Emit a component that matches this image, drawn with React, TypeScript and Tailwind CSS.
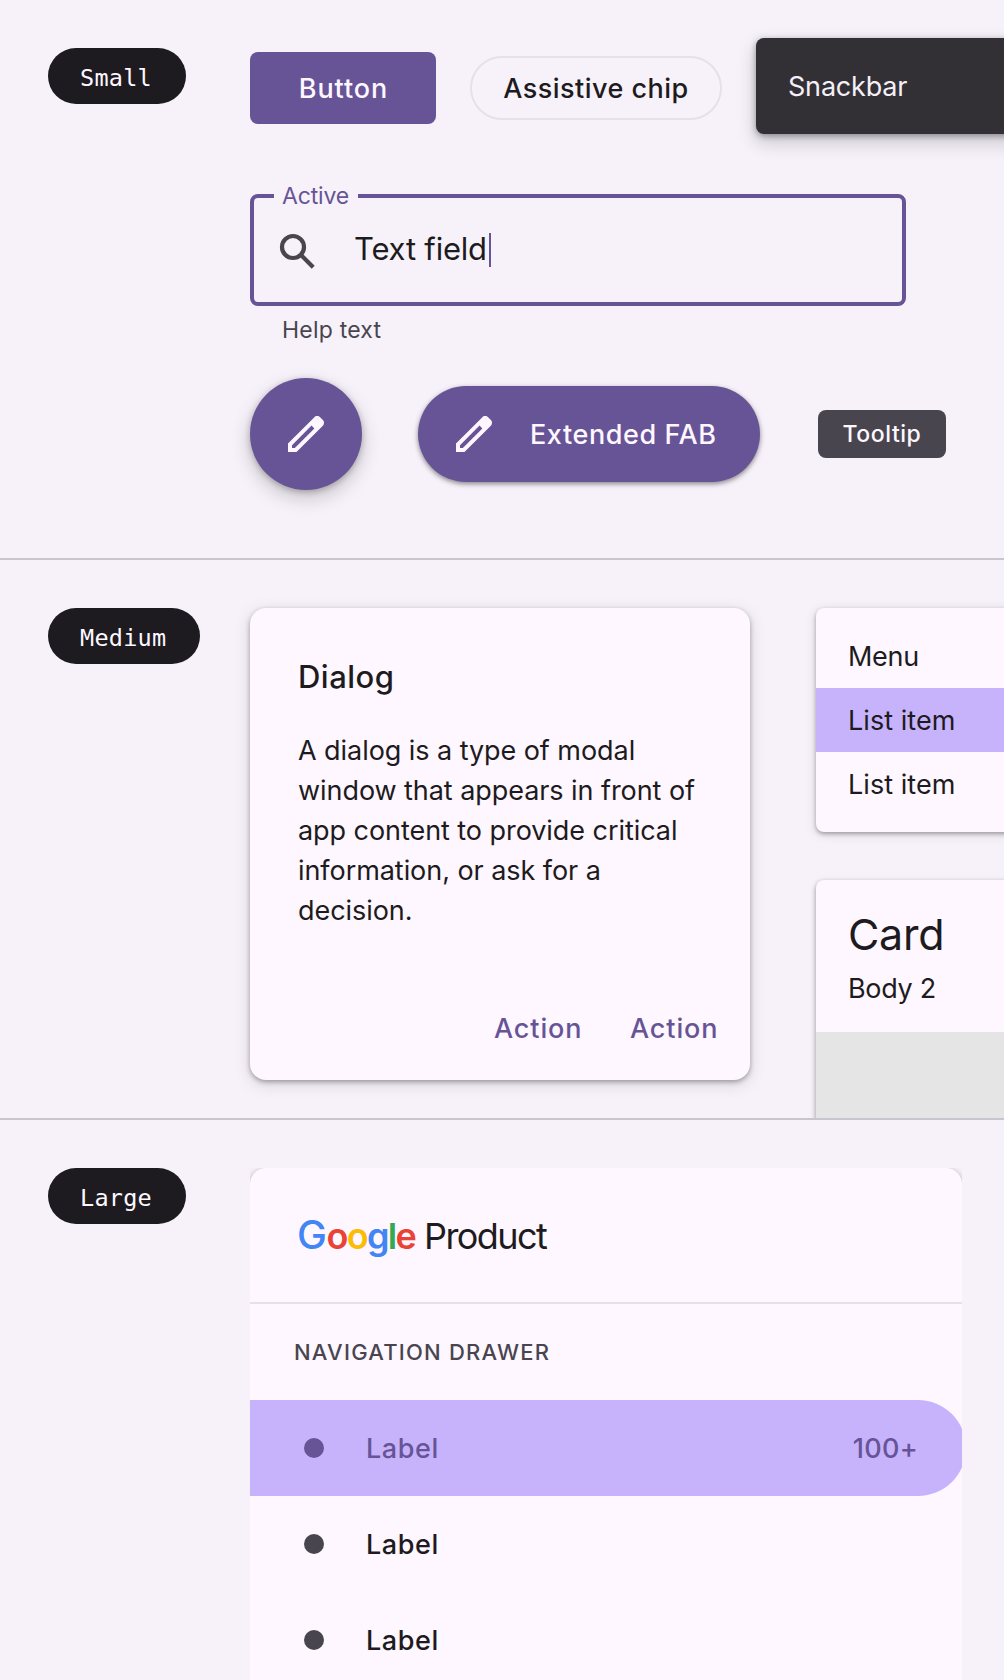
import React from "react";

function Pill({ children, width }: { children: string; width: string }) {
  return (
    <div className="w-[202px] shrink-0">
      <div
        className={`${width} h-14 rounded-full bg-[#1d1b20] pl-8 font-['DejaVu_Sans_Mono',monospace] text-[23.5px] leading-[61px] tracking-[0.25px] text-[#fef7ff]`}
      >
        {children}
      </div>
    </div>
  );
}

function PencilIcon() {
  return (
    <svg viewBox="0 0 24 24" className="size-12 shrink-0 fill-[#fef7ff]">
      <path d="M5 19h1.425L16.2 9.225 14.775 7.8 5 17.575V19Zm-2 2v-4.25L16.2 3.575c.2-.183.42-.325.663-.425.241-.1.495-.15.762-.15.267 0 .525.05.775.15.25.1.467.25.65.45L20.425 5c.2.183.346.4.437.65a2.166 2.166 0 0 1 0 1.512c-.091.242-.237.463-.437.663L7.25 21H3Z" />
    </svg>
  );
}

function SearchIcon() {
  return (
    <svg
      viewBox="0 0 24 24"
      className="mt-1 size-12 shrink-0 fill-none stroke-[#49454f] stroke-[2.1]"
    >
      <circle cx="9.5" cy="9.5" r="5.5" />
      <path d="M13.3 13.3 19.6 19.6" />
    </svg>
  );
}

function SmallSection() {
  return (
    <section className="flex h-[560px] overflow-hidden border-b-2 border-[#cac4d0] pl-12">
      <div className="pt-12">
        <Pill width="w-[138px]">Small</Pill>
      </div>
      <div className="shrink-0 pt-[38px]">
        <div className="flex h-24 items-start">
          <button className="mt-[14px] h-[72px] w-[186px] rounded-lg bg-[#675496] pt-[2px] pl-px text-[27px] font-medium tracking-[0.9px] text-[#fef7ff]">
            Button
          </button>
          <button className="mt-[18px] ml-[34px] h-16 w-[252px] whitespace-nowrap rounded-full border-2 border-[#e6e0e9] pt-[2px] text-[27px] font-medium tracking-[0.47px]">
            Assistive chip
          </button>
          <div className="ml-[34px] h-24 w-[400px] rounded-lg bg-[#322f35] pl-8 text-[27px] leading-[97px] tracking-[-0.2px] text-[#f5eff7] shadow-[0_2px_6px_rgba(0,0,0,0.35),0_8px_18px_2px_rgba(0,0,0,0.16)]">
            Snackbar
          </div>
        </div>

        <div className="relative mt-[60px] flex h-28 w-[656px] items-center rounded-lg border-4 border-[#675496] pl-5">
          <span className="absolute -top-4 left-5 h-6 w-[84px] bg-[#f7f2fa] pl-2 text-[23px] leading-[28px] tracking-[-0.15px] text-[#675496]">
            Active
          </span>
          <SearchIcon />
          <span className="mb-[2px] ml-8 text-[31px] leading-10 tracking-[-0.2px]">Text field</span>
          <span className="ml-[2px] h-[34px] w-[2px] bg-[#675496]" />
        </div>
        <div className="mt-3 pl-8 text-[23px] leading-6 tracking-[0.21px] text-[#49454f]">Help text</div>

        <div className="mt-9 flex items-center">
          <button className="flex size-28 items-center justify-center rounded-full bg-[#675496] shadow-[0_2px_6px_rgba(0,0,0,0.25),0_8px_18px_2px_rgba(0,0,0,0.16)]">
            <PencilIcon />
          </button>
          <button className="ml-14 flex h-24 w-[342px] items-center gap-8 whitespace-nowrap rounded-full bg-[#675496] pl-8 text-[27px] font-medium tracking-[0.58px] text-[#fef7ff] shadow-[0_2px_4px_rgba(0,0,0,0.35),0_2px_6px_1px_rgba(0,0,0,0.1)]">
            <PencilIcon />
            <span className="pt-[2px]">Extended FAB</span>
          </button>
          <div className="ml-[58px] h-12 w-32 rounded-lg bg-[#49454f] text-center text-[23px] font-medium leading-12 tracking-[0.54px] text-[#fef7ff]">
            Tooltip
          </div>
        </div>
      </div>
    </section>
  );
}

function MediumSection() {
  return (
    <section className="flex h-[560px] overflow-hidden border-b-2 border-[#cac4d0] pt-12 pl-12">
      <Pill width="w-[152px]">Medium</Pill>
      <div className="h-[472px] w-[500px] shrink-0 rounded-2xl bg-[#fef7ff] px-12 pt-[49px] shadow-[0_2px_5px_rgba(0,0,0,0.32),0_4px_16px_2px_rgba(0,0,0,0.1)]">
        <h2 className="text-[31px] font-medium leading-10 tracking-[0.5px]">Dialog</h2>
        <p className="mt-[34px] whitespace-nowrap text-[27px] leading-10 tracking-[-0.06px]">
          A dialog is a type of modal
          <br />
          window that appears in front of
          <br />
          app content to provide critical
          <br />
          information, or ask for a
          <br />
          decision.
        </p>
        <div className="mt-[78px] ml-[196px] flex gap-12 text-[27px] font-medium leading-10 tracking-[0.9px] text-[#675496]">
          <button className="w-[88px] text-left">Action</button>
          <button className="w-[88px] text-left">Action</button>
        </div>
      </div>

      <div className="ml-[66px] flex shrink-0 flex-col gap-12 text-[27px]">
        <div className="w-[300px] shrink-0 rounded-lg bg-[#fef7ff] py-4 shadow-[0_2px_4px_rgba(0,0,0,0.32),0_2px_12px_2px_rgba(0,0,0,0.08)]">
          <div className="h-16 pl-8 leading-[66px] tracking-[-0.3px]">Menu</div>
          <div className="h-16 bg-[#c7b3fc] pl-8 leading-[66px] tracking-[0.05px]">List item</div>
          <div className="h-16 pl-8 leading-[66px] tracking-[0.05px]">List item</div>
        </div>
        <div className="w-[300px] shrink-0 overflow-hidden rounded-lg bg-[#fef7ff] shadow-[0_2px_4px_rgba(0,0,0,0.32),0_2px_6px_2px_rgba(0,0,0,0.08)]">
          <div className="pt-[26px] pb-[23px] pl-8">
            <div className="text-[43px] leading-14 tracking-[-0.3px]">Card</div>
            <div className="mt-[7px] leading-10 tracking-[-0.3px]">Body 2</div>
          </div>
          <div className="h-[240px] bg-[#e5e5e5]" />
        </div>
      </div>
    </section>
  );
}

function DrawerRow({ active, badge }: { active?: boolean; badge?: string }) {
  return (
    <div
      className={`flex h-24 w-[716px] items-center rounded-r-full pr-12 pl-[54px] text-[27px] font-medium ${
        active ? "bg-[#c7b3fc] text-[#675496]" : ""
      }`}
    >
      <span className={`size-5 rounded-full ${active ? "bg-[#675496]" : "bg-[#49454f]"}`} />
      <span className="ml-[42px] pt-[2px] tracking-[0.6px]">Label</span>
      {badge && <span className="ml-auto pt-[2px] tracking-[0.3px]">{badge}</span>}
    </div>
  );
}

function LargeSection() {
  return (
    <section className="flex h-[560px] overflow-hidden pt-12 pl-12">
      <Pill width="w-[138px]">Large</Pill>
      <div className="h-[512px] w-[712px] shrink-0 overflow-hidden">
        <div className="h-[660px] rounded-t-2xl bg-[#fef7ff] shadow-[0_2px_6px_rgba(0,0,0,0.3),0_8px_16px_rgba(0,0,0,0.12)]">
          <div className="flex h-[136px] items-baseline border-b-2 border-[#e6e0e9] pt-[39px] pl-[47px] leading-14">
            <span className="w-[127px] whitespace-nowrap text-[36px] font-semibold tracking-[-1.7px]">
              <span className="text-[40px] font-medium tracking-[-0.5px] text-[#4285f4]">G</span>
              <span className="text-[#ea4335]">o</span>
              <span className="text-[#fbbc05]">o</span>
              <span className="text-[#4285f4]">g</span>
              <span className="text-[#34a853]">l</span>
              <span className="text-[#ea4335]">e</span>
            </span>
            <span className="text-[36px] tracking-[-1.57px]">Product</span>
          </div>
          <div className="h-24 pl-11 text-[22px] font-medium leading-24 tracking-[1.22px] text-[#49454f]">
            NAVIGATION DRAWER
          </div>
          <DrawerRow active badge="100+" />
          <DrawerRow />
          <DrawerRow />
        </div>
      </div>
    </section>
  );
}

export default function App() {
  return (
    <main className="h-[1680px] w-[1004px] overflow-hidden bg-[#f7f2fa] font-['Inter',sans-serif] text-[#1d1b20]">
      <SmallSection />
      <MediumSection />
      <LargeSection />
    </main>
  );
}
